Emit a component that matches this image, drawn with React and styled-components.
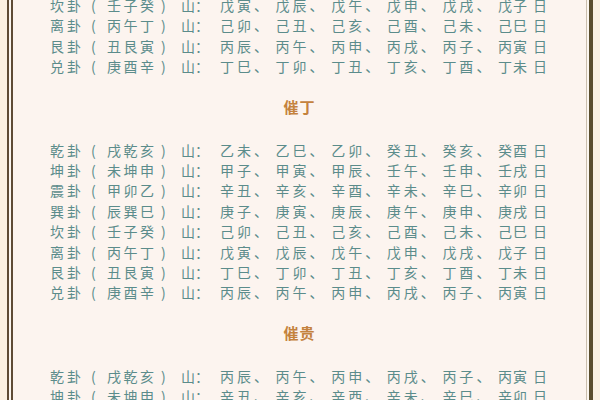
import React from 'react';
import styled, { createGlobalStyle } from 'styled-components';

const GlobalStyle = createGlobalStyle`
    html, body {
        margin: 0;
        padding: 0;
        background: #fbf1e2;
        overflow: hidden;
    }
`;

// rows: [卦, 山, 六个日子]
const topRows = [
    ['坎卦', '壬子癸', ['戊寅', '戊辰', '戊午', '戊申', '戊戌', '戊子']],
    ['离卦', '丙午丁', ['己卯', '己丑', '己亥', '己酉', '己未', '己巳']],
    ['艮卦', '丑艮寅', ['丙辰', '丙午', '丙申', '丙戌', '丙子', '丙寅']],
    ['兑卦', '庚酉辛', ['丁巳', '丁卯', '丁丑', '丁亥', '丁酉', '丁未']],
];

const dingRows = [
    ['乾卦', '戌乾亥', ['乙未', '乙巳', '乙卯', '癸丑', '癸亥', '癸酉']],
    ['坤卦', '未坤申', ['甲子', '甲寅', '甲辰', '壬午', '壬申', '壬戌']],
    ['震卦', '甲卯乙', ['辛丑', '辛亥', '辛酉', '辛未', '辛巳', '辛卯']],
    ['巽卦', '辰巽巳', ['庚子', '庚寅', '庚辰', '庚午', '庚申', '庚戌']],
    ['坎卦', '壬子癸', ['己卯', '己丑', '己亥', '己酉', '己未', '己巳']],
    ['离卦', '丙午丁', ['戊寅', '戊辰', '戊午', '戊申', '戊戌', '戊子']],
    ['艮卦', '丑艮寅', ['丁巳', '丁卯', '丁丑', '丁亥', '丁酉', '丁未']],
    ['兑卦', '庚酉辛', ['丙辰', '丙午', '丙申', '丙戌', '丙子', '丙寅']],
];

const guiRows = [
    ['乾卦', '戌乾亥', ['丙辰', '丙午', '丙申', '丙戌', '丙子', '丙寅']],
    ['坤卦', '未坤申', ['辛丑', '辛亥', '辛酉', '辛未', '辛巳', '辛卯']],
];

function GuaRow({ row }) {
    const [gua, mount, days] = row;
    const last = days[days.length - 1];
    return (
        <Row>
            <Gua>{gua}</Gua>
            <Paren>(</Paren>
            <Mount>{mount}</Mount>
            <Paren wide>)</Paren>
            <Shan>山：</Shan>
            {days.slice(0, -1).map((d, i) => (
                <Day key={i}>{d}、</Day>
            ))}
            <LastDay>{last}</LastDay>
            <Ri>日</Ri>
        </Row>
    );
}

export default function App() {
    return (
        <>
            <GlobalStyle />
            <Frame>
                <Panel>
                    <Content>
                        {topRows.map((r, i) => <GuaRow key={i} row={r} />)}
                        <Heading>催丁</Heading>
                        {dingRows.map((r, i) => <GuaRow key={i} row={r} />)}
                        <Heading>催贵</Heading>
                        {guiRows.map((r, i) => <GuaRow key={i} row={r} />)}
                    </Content>
                </Panel>
            </Frame>
        </>
    );
}

const Frame = styled.div`
    box-sizing: border-box;
    width: 586px;
    height: 400px;
    margin-left: 7px;
    border-left: 6px double #5e4b35;
    border-right: 4px solid #5b4e2e;
    padding-right: 2px;
    background: #fbf6f0;
`;

const Panel = styled.div`
    height: 400px;
    overflow: hidden;
    border-right: 1px solid #cbbfae;
    background: #fcf4ef;
`;

const Content = styled.div`
    margin-top: -5px;
    font-family: "Noto Sans CJK SC", "Noto Sans CJK TC", sans-serif;
    font-size: 14px;
    color: #5b8c8b;
`;

const Row = styled.div`
    display: flex;
    height: 20.4px;
    line-height: 20.4px;
    padding-left: 37px;
    white-space: nowrap;
`;

const Gua = styled.span`
    flex: none;
    width: 37px;
    letter-spacing: 3px;
`;

const Paren = styled.span`
    flex: none;
    width: ${p => (p.wide ? '24px' : '20px')};
    padding-left: 4px;
    box-sizing: border-box;
`;

const Mount = styled.span`
    flex: none;
    width: 50px;
    letter-spacing: 2.5px;
`;

const Shan = styled.span`
    flex: none;
    width: 39px;
`;

const Day = styled.span`
    flex: none;
    width: 55.6px;
    letter-spacing: 3px;
`;

const LastDay = styled.span`
    flex: none;
    width: 35px;
    letter-spacing: 1px;
`;

const Ri = styled.span`
    flex: none;
`;

const Heading = styled.div`
    margin: 20px 0 23px;
    height: 20px;
    line-height: 20px;
    text-align: center;
    font-size: 15px;
    font-weight: 700;
    color: #c4823e;
    letter-spacing: 1px;
`;
